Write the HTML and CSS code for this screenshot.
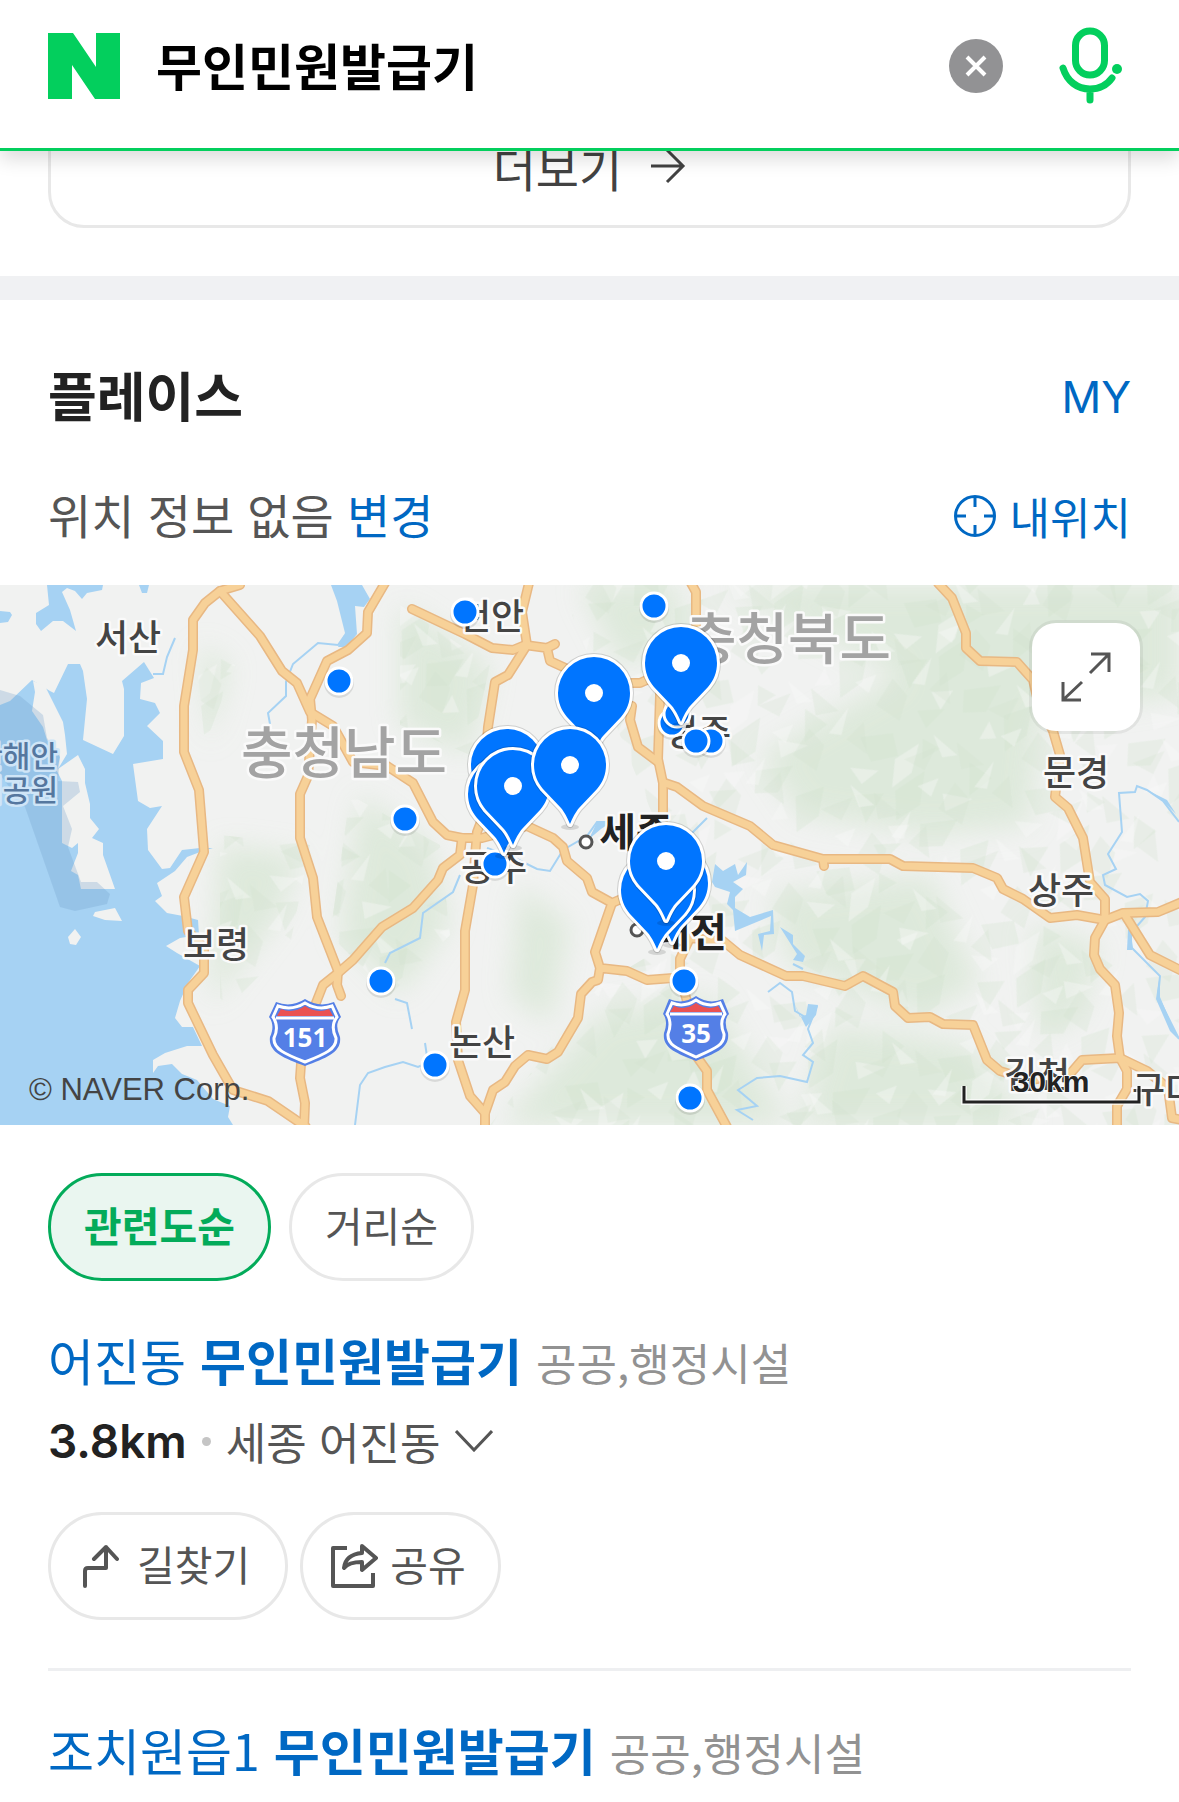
FILE: index.html
```html
<!DOCTYPE html>
<html lang="ko">
<head>
  <meta charset="utf-8">
  <meta name="viewport" content="width=device-width, initial-scale=1.0">
  <title>무인민원발급기 : 네이버 통합검색</title>
  <link rel="stylesheet" href="styles.css">
</head>
<body>

  <header class="search-header">
    <a class="logo" href="#" aria-label="NAVER">
      <svg width="72" height="66" viewBox="0 0 72 66"><path d="M0 0h25l23 34V0h24v66H47L24 32v34H0z" fill="#03cf5d"/></svg>
    </a>
    <form class="search-form" action="#">
      <input class="search-input" type="text" value="무인민원발급기" aria-label="검색어">
      <button class="clear-btn" type="button" aria-label="삭제">
        <svg width="54" height="54" viewBox="0 0 54 54"><circle cx="27" cy="27" r="27" fill="#929294"/><path d="M18 18l18 18M36 18L18 36" stroke="#fff" stroke-width="4"/></svg>
      </button>
      <button class="mic-btn" type="button" aria-label="음성검색">
        <svg width="64" height="78" viewBox="0 0 64 78" fill="none" stroke="#03cf5d" stroke-width="7" stroke-linecap="round">
          <rect x="16.500" y="4" width="29" height="44" rx="14.500"/>
          <path d="M4 41C8 54 18 62 31 62c9 0 17-4 22-11M31 62v11"/>
          <circle cx="58" cy="42" r="5" fill="#03cf5d" stroke="none"/>
        </svg>
      </button>
    </form>
  </header>

  <main>
    <div class="more-wrap">
      <a class="more-link" href="#">더보기
        <svg width="36" height="38" viewBox="0 0 36 38" fill="none" stroke="#424242" stroke-width="3"><path d="M1 19h32M17 3l16 16-16 16"/></svg>
      </a>
    </div>

    <section class="place">
      <div class="place-head">
        <h2>플레이스</h2>
        <a class="my-link" href="#">MY</a>
      </div>
      <div class="location">
        <p>위치 정보 없음 <a href="#">변경</a></p>
        <button class="my-location" type="button">
          <svg width="42" height="42" viewBox="0 0 42 42" fill="none" stroke="#0068c3" stroke-width="3"><circle cx="21" cy="21" r="19.500"/><path d="M21 2v10M21 30v10M2 21h10M30 21h10"/></svg>
          내위치
        </button>
      </div>

      <div class="map">
        <svg class="map-canvas" viewBox="0 0 1179 540" role="img" aria-label="지도">
          <defs>
            <!-- relief texture, two layers repeated over the mountain areas -->
            <pattern id="relief" width="173" height="141" patternUnits="userSpaceOnUse" patternTransform="rotate(18)">
              <path d="M0 20l30-14 12 20-24 14zM50 60l22-28 6 34-18 22zM112 10l26 8-16 24zM14 76l26-10-8 34zM84 84l34-16-6 30-22 8zM60 2l20 4-14 16zM130 96l24-18 4 30-16 22zM46 118l26-10-12 24z" fill="#cbdfc8" opacity=".26"/>
              <path d="M40 30l18-22 2 30-14 20zM0 52l28-6-12 18zM96 48l30-4-22 20zM54 96l20-8-6 22zM118 106l12 14-16 6z" fill="#f7f7f7" opacity=".4"/>
            </pattern>
            <pattern id="relief2" width="97" height="121" patternUnits="userSpaceOnUse" patternTransform="rotate(-31)">
              <path d="M6 10l34 6-22 14zM60 22l12 34-22-8zM10 70l28-14 4 22-20 18zM64 84l24-6-14 30z" fill="#cfe0cc" opacity=".26"/>
              <path d="M44 4l10 30-14-6zM4 40l22 4-16 12zM52 70l30-12-20 20z" fill="#fafafa" opacity=".36"/>
            </pattern>
            <filter id="soft" x="-20%" y="-20%" width="140%" height="140%"><feGaussianBlur stdDeviation="14"/></filter>
            <path id="hills" d="M560 0H1179V540H490L600 400 700 340 640 200zM400 20l90 60-20 90-70-30zM350 210l90 50 10 90-60 60-60-60zM195 60l40 20-30 80zM220 250l90 10-20 100-70 70z"/>
            <path id="pinShape" d="M0 59C-3 52-5 48-9 43L-27 24C-33 17-36 9-36 0a36 36 0 0 1 72 0c0 9-3 17-9 24L9 43C5 48 3 52 0 59z"/>
            <g id="pin">
              <ellipse cx="0" cy="62" rx="9" ry="3" fill="#000" opacity=".12"/>
              <use href="#pinShape" fill="none" stroke="#000" stroke-opacity=".15" stroke-width="8" stroke-linejoin="round"/>
              <use href="#pinShape" fill="#0075ff" stroke="#fff" stroke-width="6" stroke-linejoin="round"/>
              <use href="#pinShape" fill="#0075ff"/>
              <circle r="9" fill="#fff"/>
            </g>
            <g id="spot">
              <circle cy="2" r="15" fill="#000" opacity=".1"/>
              <circle r="13" fill="#0075ff" stroke="#fff" stroke-width="3"/>
            </g>
            <g id="roads">
              <path d="M240 0L220 6 205 18 193 35V65L184 121V167L199 205 204 267 184 312 188 346 204 363V388L188 405V418L213 470 233 505 268 516 306 542"/>
              <path d="M220 6L260 51 282 86 297 98 310 127 333 141 353 177 387 181 413 198 433 237 447 250 462 253H482L527 241 553 253 563 262 567 276 587 293 592 307 612 318 626 312"/>
              <path d="M385-2L368 27 367 48 348 65 327 76 310 114 312 135 308 191 300 209V253L313 293 317 332 338 386 337 400 341 411"/>
              <path d="M462 253L460 270 443 283 438 295 413 323 382 342 353 375 338 388 323 400 303 451 300 493 305 518 304 542"/>
              <path d="M529-2L522 27 527 60 508 90 495 97 488 142 482 234 477 247 475 272 473 300 465 346V405L456 437 458 475 470 511 485 528V542"/>
              <path d="M412 24L465 49 492 63 513 65 525 60 547 63 555 59M547 63L550 76 572 86M632 98H640L658 90M632 121L630 135 638 162 658 177"/>
              <path d="M691-2L696 7V40M661 80L658 174 663 198V240"/>
              <path d="M665 198L677 202 703 221 750 241 773 260 823 274H890L903 281 973 283 997 293 1003 304 1023 314 1050 333 1077 330 1105 335 1123 328 1158 327 1182 317M823 274L824 281"/>
              <path d="M612 318L595 367 600 383 627 386 647 395 673 393M600 383L598 395 592 397 581 409 578 433 558 467 547 474 528 470 515 481 505 497 493 505 485 528"/>
              <path d="M688 420L680 391V374L690 353 723 356 740 370 786 391H803L845 401 863 391 893 407 895 421 908 433 930 432 943 439 973 440 987 475 1000 486 1030 495 1070 489 1082 475 1120 473 1147 486 1168 503 1172 533 1182 535"/>
              <path d="M697 472L707 486V505L727 542"/>
              <path d="M938-2L952 13 966 48V63L980 76 1017 77 1033 95 1038 116 1053 146 1060 170 1055 212 1068 223 1083 253 1090 297 1105 314V335L1095 353 1094 370 1100 384 1115 400 1119 428 1117 451 1120 473 1127 486V504L1117 521V542M1125 330L1150 370 1182 386"/>
            </g>
          </defs>

          <rect width="1179" height="540" fill="#f1f2f1"/>
          <g fill="#d9e7d6" filter="url(#soft)" opacity=".8">
            <path d="M720 0H1179V110L1040 130 1030 240 930 250 800 230 760 170 900 90z"/>
            <path d="M580 0h100v60l-60 20zM400 20l90 60-20 90-70-30zM360 210l70 50 20 80-50 70-60-60zM520 300l50 40-20 100-40-30z"/>
            <path d="M200 60l30 20-20 80zM220 260l80 10-20 60-70 90zM600 430l110-20 80 130H500zM770 310l160-20 50 110-60 30-130-50z"/>
            <path d="M830 440l140 20 60 80H800zM1030 340l70 20-20 70-40 20z"/>
          </g>
          <use href="#hills" fill="url(#relief)"/>
          <use href="#hills" fill="url(#relief2)"/>

          <!-- sea -->
          <g fill="#a6d2f3">
            <path d="M0 120L10 116 32 95 50 106 54 108 68 79H80L83 86 87 114 83 155 113 169 124 151V104L122 96 144 77 154 93 141 98 140 114 155 118 160 128 147 141 163 156V174L133 179 138 216 150 223 162 221 147 244 148 265 162 284 170 283 182 265 200 263H213L200 267 187 272 175 286 157 298 162 311 155 316 167 328 183 331 198 335 199 350 180 353 166 361 177 368 200 381 188 398 180 416 175 433 182 442H193L202 461H187L165 468 153 475V488L158 481 172 479 182 489 197 495 213 514 230 521 228 532 233 540H0z"/>
            <path d="M47 0L49 20 36 28V39L41 46 53 36H63L76 46 70 25 62 7 67 3 75 6 82 14 87 8 102 5 103 0zM0 26L10 27 12 30 8 37 0 38zM139 0L142 8H147L149 0zM331 0L337 16 345 48 338 62H347L357 49 355 21 364 22 370 14 362 0z"/>
            <path d="M712 297L715 279 723 286 735 279 738 290 747 277 746 290 733 297 743 304 735 312V323L750 332 773 325 774 349 764 350 762 366 758 349 770 346 771 331 735 346 733 325 727 319 730 307 715 302zM780 342L793 350V359L805 371 803 377 793 375 797 369zM795 420L800 432 806 430 808 419 818 420 816 430 806 442z"/>
          </g>
          <g fill="none" stroke="#a6d2f3" stroke-width="2">
            <path d="M1179 237L1163 216 1147 205 1137 201 1135 207 1119 208 1122 247 1108 269 1116 284 1103 290 1105 300 1127 312 1140 309 1148 316 1145 332 1130 349 1132 363 1160 391 1158 412 1179 454"/>
            <path d="M610 237H597L587 251 563 265 550 286 537 284 517 274 487 263M460 290L453 307 423 328 420 353 390 368 385 378M707 233L692 248"/>
            <path d="M768 407L780 398 792 407 795 426 807 433 817 421 808 444 813 458 803 470 813 477 807 497 780 491 757 493 738 505 757 521 737 525 753 535M793 379L803 384"/>
            <path d="M427 478L418 482 403 477 385 482 368 488 360 500 355 540M428 478L425 458M395 414L407 418 412 444"/>
            <path d="M345 50L338 60 318 58 293 79 286 97V111L268 128 270 139M175 53L167 72 163 89H153"/>
          </g>
          <path d="M597 237l16-1-12 8-12 10M1158 400l2-10 0 22 18 42-8-8-14-32zM1128 345h4v20h-5zM1147 205l20 10 9 14-12-12z" fill="#a6d2f3"/>
          <path d="M33 96L45 101 63 137 65 150 67 169 58 184 78 170 85 184V198L90 219V233L99 244 92 253 103 258V270L115 304H81L78 290 71 286 78 268V258L72 263 62 258V196L57 186 60 172 47 155 43 142 32 126 35 107zM95 327L115 323 122 336 105 335 93 331zM68 352L75 344 81 352 76 360 70 359z" fill="#f1f2f1"/>
          <path d="M0 105L20 111 43 130 47 153 60 170 58 196 78 197 80 207 63 221 72 244 68 262 81 297H97L110 309 107 319 75 326 60 322 25 222 0 190z" fill="#6e9fca" opacity=".28"/>

          <g fill="none" stroke-linecap="round" stroke-linejoin="round">
            <use href="#roads" stroke="#e8b883" stroke-width="10"/>
            <use href="#roads" stroke="#f7d198" stroke-width="7"/>
          </g>

          <g class="city">
            <text x="128" y="66">서산</text>
            <text x="491" y="45">천안</text>
            <text x="698" y="161">청주</text>
            <text x="494" y="296">공주</text>
            <text x="482" y="471">논산</text>
            <text x="216" y="373">보령</text>
            <text x="1076" y="201">문경</text>
            <text x="1061" y="319">상주</text>
            <text x="1037" y="503">김천</text>
            <text x="1165" y="518">구미</text>
          </g>
          <g class="metro">
            <text x="636" y="262">세종</text>
            <text x="690" y="362">대전</text>
          </g>
          <g fill="#fff" stroke="#555" stroke-width="3"><circle cx="586" cy="257" r="6"/><circle cx="637" cy="345" r="6"/></g>
          <g class="province">
            <text x="344" y="188">충청남도</text>
            <text x="788" y="74">충청북도</text>
          </g>
          <g class="park">
            <text x="58" y="182">태안해안</text>
            <text x="58" y="216">국립공원</text>
          </g>

          <!-- expressway shields -->
          <g transform="translate(305 447)">
            <path d="M-29-30Q-14-24 0-33 14-24 29-30L36-15Q29-8 35 5C37 20 22 26 0 34-22 26-37 20-35 5-29-8-36-15-36-15z" fill="#547fe6"/>
            <path d="M-27-26Q-13-21 0-29 13-21 27-26L32-15Q25-6 31 6C32 17 20 22 0 30-20 22-32 17-31 6-25-6-32-15-32-15z" fill="#547fe6" stroke="#fff" stroke-width="3"/>
            <path d="M-24-23Q-12-18 0-26 12-18 24-23L28-16H-28z" fill="#ea5252"/>
            <path d="M-29-14H29" stroke="#fff" stroke-width="3"/>
            <text class="shield-no" y="15">151</text>
          </g>
          <g transform="translate(696 443)">
            <path d="M-27-29Q-13-23 0-32 13-23 27-29L33-14Q27-8 32 5C34 20 20 25 0 33-20 25-34 20-32 5-27-8-33-14-33-14z" fill="#547fe6"/>
            <path d="M-24-25Q-12-20 0-28 12-20 24-25L29-14Q23-6 28 6C29 17 18 21 0 29-18 21-29 17-28 6-23-6-29-14-29-14z" fill="#547fe6" stroke="#fff" stroke-width="3"/>
            <path d="M-22-22Q-11-17 0-25 11-17 22-22L26-16H-26z" fill="#ea5252"/>
            <path d="M-26-14H26" stroke="#fff" stroke-width="3"/>
            <text class="shield-no" y="15">35</text>
          </g>

          <use href="#spot" x="339" y="96"/>
          <use href="#spot" x="405" y="234"/>
          <use href="#spot" x="381" y="396"/>
          <use href="#spot" x="465" y="27"/>
          <use href="#spot" x="654" y="21"/>
          <use href="#spot" x="495" y="279"/>
          <use href="#spot" x="672" y="138"/>
          <use href="#spot" x="677" y="129"/>
          <use href="#spot" x="711" y="156"/>
          <use href="#spot" x="696" y="156"/>
          <use href="#spot" x="684" y="396"/>
          <use href="#spot" x="435" y="480"/>
          <use href="#spot" x="690" y="513"/>
          <use href="#pin" x="681" y="78"/>
          <use href="#pin" x="594" y="108"/>
          <use href="#pin" x="507" y="180"/>
          <use href="#pin" x="504" y="209"/>
          <use href="#pin" x="513" y="201"/>
          <use href="#pin" x="570" y="180"/>
          <use href="#pin" x="672" y="298"/>
          <use href="#pin" x="657" y="305"/>
          <use href="#pin" x="666" y="276"/>

          <path d="M964 501v16h175v-16" fill="none" stroke="#fff" stroke-opacity=".7" stroke-width="6"/>
          <path d="M964 501v16h175v-16" fill="none" stroke="#222" stroke-width="3"/>
          <text class="scale" x="1051" y="507">30km</text>
          <text class="copyright" x="29" y="515">© NAVER Corp.</text>
        </svg>
        <button class="expand-btn" type="button" aria-label="지도 확대">
          <svg width="108" height="108" viewBox="0 0 108 108" fill="none" stroke="#555" stroke-width="3"><path d="M59 31h18v18M77 31L58 50M31 59v18h18M31 77l19-18"/></svg>
        </button>
      </div>

      <div class="sort">
        <button class="chip chip-on" type="button"><span>관련도순</span></button>
        <button class="chip" type="button"><span>거리순</span></button>
      </div>

      <ul class="place-list">
        <li class="item">
          <h3><a href="#">어진동 <b>무인민원발급기</b></a> <span class="category">공공,행정시설</span></h3>
          <div class="info">
            <strong>3.8km</strong>
            <i class="bullet"></i>
            <button class="address" type="button">세종 어진동
              <svg width="38" height="22" viewBox="0 0 38 22" fill="none" stroke="#555" stroke-width="3"><path d="M1 1l18 19L37 1"/></svg>
            </button>
          </div>
          <div class="actions">
            <a class="chip action" href="#">
              <svg width="38" height="46" viewBox="0 0 38 46" fill="none" stroke="#555" stroke-width="4" stroke-linecap="round" stroke-linejoin="round"><path d="M4 43V28q0-3 3-3h18V4M13 16L25 4l11 12"/></svg>
              <span>길찾기</span>
            </a>
            <button class="chip action share" type="button">
              <svg width="48" height="48" viewBox="0 0 48 48" fill="none" stroke="#555" stroke-width="4" stroke-linejoin="round"><path d="M17 6H3v38h40V31"/><path d="M32 4l14 12-14 12v-8c-10 0-15 2-18 6 1-9 7-14 18-15z"/></svg>
              <span>공유</span>
            </button>
          </div>
        </li>
        <li class="item">
          <h3><a href="#">조치원읍1 <b>무인민원발급기</b></a> <span class="category">공공,행정시설</span></h3>
        </li>
      </ul>
    </section>
  </main>

</body>
</html>
```
FILE: styles.css
```css
* {
  box-sizing: border-box;
}

body {
  margin: 0;
  background-color: #fff;
  color: #222;
  font-family: "Noto Sans CJK KR", "Noto Sans", sans-serif;
}

a {
  color: #0068c3;
  text-decoration: none;
}

button, input {
  margin: 0;
  padding: 0;
  border: none;
  background: none;
  color: inherit;
  font-family: inherit;
}

svg {
  display: block;
  flex-shrink: 0;
}

/* header */
.search-header {
  position: fixed;
  top: 0;
  left: 0;
  right: 0;
  z-index: 10;
  display: flex;
  align-items: center;
  gap: 36px;
  padding: 18px 56px 34px 48px;
  border-bottom: 3px solid #03cf5d;
  background-color: #fff;
  box-shadow: 0 8px 18px rgba(0, 0, 0, 0.14);
}

.search-form {
  flex: 1;
  display: flex;
  align-items: center;
  min-width: 0;
}

.search-input {
  flex: 1;
  min-width: 0;
  height: 96px;
  padding-bottom: 4px;
  outline: none;
  color: #000;
  font-size: 50px;
  font-weight: 700;
}

.clear-btn {
  margin-right: 56px;
}

/* more button under the header */
main {
  padding-top: 108px;
}

.more-wrap {
  padding: 0 48px 48px;
  border-bottom: 24px solid #f0f1f3;
}

.more-link {
  display: flex;
  align-items: center;
  justify-content: center;
  gap: 28px;
  height: 120px;
  padding-bottom: 4px;
  border: 3px solid #e8e8e8;
  border-radius: 36px;
  color: #424242;
  font-size: 47px;
}

/* place */
.place-head,
.location {
  display: flex;
  align-items: center;
  justify-content: space-between;
  padding: 0 48px;
}

.place-head {
  padding-top: 58px;
}

.place-head h2 {
  margin: 0;
  font-size: 53px;
  line-height: 72px;
}

.my-link {
  padding-top: 6px;
  font-family: "Inter", sans-serif;
  font-size: 44px;
}

.location {
  padding-top: 54px;
  padding-bottom: 41px;
  color: #555;
  font-size: 47px;
  line-height: 60px;
}

.location p {
  margin: 0;
}

.my-location {
  display: flex;
  align-items: center;
  gap: 14px;
  padding-top: 4px;
  color: #0068c3;
  font-size: 44px;
  line-height: 56px;
}

/* map */
.map {
  position: relative;
}

.map-canvas {
  width: 100%;
  height: auto;
}

.map-canvas text {
  text-anchor: middle;
  paint-order: stroke;
  stroke: #fafafa;
  stroke-width: 5px;
  stroke-linejoin: round;
}

.city {
  fill: #444;
  font-size: 36px;
  font-weight: 500;
}

.metro {
  fill: #222;
  font-size: 40px;
  font-weight: 700;
}

.province {
  fill: #a3a3a3;
  font-size: 56px;
  font-weight: 500;
}

.map-canvas .park text {
  fill: #55779f;
  font-size: 30px;
  font-weight: 500;
  text-anchor: end;
  stroke: #cfe5f7;
}

.map-canvas .shield-no {
  fill: #fff;
  font-family: "Noto Sans", sans-serif;
  font-size: 26px;
  font-weight: 700;
  stroke: none;
}

.map-canvas .scale {
  fill: #222;
  font-family: "Liberation Sans", sans-serif;
  font-size: 30px;
  font-weight: 700;
  stroke-width: 2px;
}

.map-canvas .copyright {
  fill: #444;
  font-family: "Liberation Sans", sans-serif;
  font-size: 31px;
  text-anchor: start;
  stroke: none;
}

.expand-btn {
  position: absolute;
  top: 38px;
  right: 39px;
  border-radius: 24px;
  background-color: #fff;
  box-shadow: 0 0 0 3px rgba(0, 0, 0, 0.06);
}

/* chips */
.sort {
  display: flex;
  gap: 18px;
  padding: 48px 48px 0;
}

.chip {
  display: flex;
  align-items: center;
  height: 108px;
  padding: 0 33px;
  border: 3px solid #e8e8e8;
  border-radius: 54px;
  color: #555;
  font-size: 41px;
}

.chip span {
  padding-bottom: 6px;
}

.chip-on {
  border-color: #03ab5a;
  background-color: #eaf6f0;
  color: #03ab5a;
  font-weight: 700;
}

/* list */
.place-list {
  margin: 0;
  padding: 0 48px;
  list-style: none;
}

.item {
  padding: 44px 0 48px;
}

.item + .item {
  padding-bottom: 16px;
  border-top: 3px solid #eeeff1;
}

.item h3 {
  margin: 0;
  font-size: 50px;
  font-weight: 400;
  line-height: 68px;
}

.category {
  color: #929292;
  font-size: 44px;
  line-height: 60px;
}

.info {
  display: flex;
  align-items: center;
  gap: 15px;
  margin-top: 18px;
  font-size: 46px;
  line-height: 60px;
}

.info strong {
  font-family: "Inter", sans-serif;
  font-weight: 600;
}

.bullet {
  width: 9px;
  height: 9px;
  border-radius: 50%;
  background-color: #c5c5c5;
}

.address {
  display: flex;
  align-items: center;
  gap: 14px;
  color: #555;
  font-size: 44px;
  line-height: 60px;
}

.actions {
  display: flex;
  gap: 12px;
  margin-top: 41px;
}

.action {
  gap: 18px;
  padding: 0 35px 0 30px;
}

.share {
  gap: 12px;
  padding-right: 32px;
  padding-left: 27px;
}
```
